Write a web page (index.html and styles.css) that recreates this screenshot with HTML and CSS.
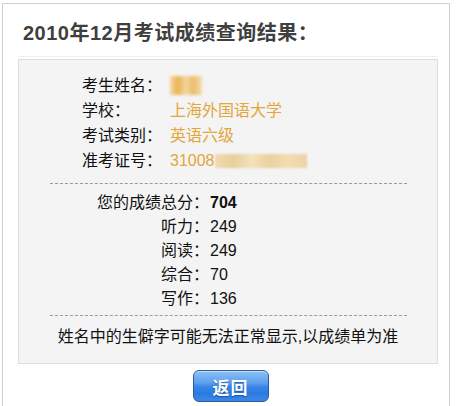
FILE: index.html
```html
<!DOCTYPE html>
<html lang="zh-CN">
<head>
<meta charset="utf-8">
<title>成绩查询结果</title>
<link rel="stylesheet" href="styles.css">
</head>
<body>
<div class="page">
  <h1 class="title">2010年12月考试成绩查询结果：</h1>
  <div class="panel">
    <div class="info">
      <div class="row"><span class="lbl">考生姓名：</span><span class="val"><span class="blur-name"></span></span></div>
      <div class="row"><span class="lbl">学校：</span><span class="val">上海外国语大学</span></div>
      <div class="row"><span class="lbl">考试类别：</span><span class="val">英语六级</span></div>
      <div class="row"><span class="lbl">准考证号：</span><span class="val">31008<span class="blur-num"></span></span></div>
    </div>
    <div class="dash"></div>
    <div class="scores">
      <span class="slbl">您的成绩总分：</span><span class="sval total">704</span>
      <span class="slbl">听力：</span><span class="sval">249</span>
      <span class="slbl">阅读：</span><span class="sval">249</span>
      <span class="slbl">综合：</span><span class="sval">70</span>
      <span class="slbl">写作：</span><span class="sval">136</span>
    </div>
    <div class="dash dash2"></div>
    <p class="note">姓名中的生僻字可能无法正常显示,以成绩单为准</p>
  </div>
  <div class="actions">
    <button class="btn" type="button">返回</button>
  </div>
</div>
</body>
</html>
```
FILE: styles.css
```css
html, body {
  margin: 0;
  padding: 0;
  background: #fff;
  overflow: hidden;
}
body {
  font-family: "Liberation Sans", "Noto Sans CJK SC", sans-serif;
  color: #111;
}
.page {
  margin: 3px 0 0 2px;
  width: 448px;
  height: 403px;
  border: 1px solid #cfcfcf;
  border-bottom: none;
  box-sizing: border-box;
}
.title {
  margin: 0 11px 2px 15px;
  padding: 15px 0 9px 5px;
  font-size: 20px;
  line-height: 28px;
  font-weight: bold;
  letter-spacing: 0.5px;
  color: #3f3f3f;
  border-bottom: 1px solid #f1f1f1;
}
.panel {
  margin: 0 11px 0 15px;
  border: 1px solid #dedede;
  background: #f4f4f4;
  padding-bottom: 14px;
}
.info {
  padding: 13px 0 10px 63px;
}
.row {
  display: flex;
  font-size: 16px;
  line-height: 25px;
  height: 25px;
  align-items: center;
}
.lbl {
  width: 88px;
  color: #111;
}
.val {
  color: #e3a53c;
  display: flex;
  align-items: center;
}
.blur-name {
  display: inline-block;
  width: 32px;
  height: 19px;
  background:
    linear-gradient(90deg, #f2d69a 0%, #e7ad45 25%, #f1d49a 50%, #e9b75a 72%, #f3dba8 100%);
  filter: blur(1.5px);
  opacity: 0.9;
}
.blur-num {
  display: inline-block;
  width: 92px;
  height: 14px;
  background:
    linear-gradient(90deg, #f1dcb0 0%, #e9cf9a 20%, #f3e2bd 40%, #ebd19d 60%, #f2deb4 80%, #ecd3a3 100%);
  filter: blur(1px);
}
.dash {
  margin: 0 30px 0 31px;
  border-top: 1px dashed #9a9a9a;
}
.scores {
  display: grid;
  grid-template-columns: 190px auto;
  padding: 7px 0 4px;
  font-size: 16px;
  line-height: 24px;
}
.slbl {
  text-align: right;
  color: #111;
}
.sval {
  padding-left: 1px;
  color: #111;
}
.total {
  font-weight: bold;
}
.note {
  margin: 0;
  padding-top: 9px;
  text-align: center;
  font-size: 16px;
  line-height: 24px;
  color: #111;
}
.actions {
  margin: 6px 11px 0 15px;
  display: flex;
  justify-content: center;
  padding-left: 5px;
}
.btn {
  width: 76px;
  height: 32px;
  border: 1px solid #2a5a98;
  border-radius: 6px;
  background: linear-gradient(#8cc0f6 0%, #5d9fee 40%, #3a86e6 52%, #2c7ade 75%, #3a88e8 100%);
  color: #fff;
  font-family: "Noto Sans CJK SC", sans-serif;
  font-size: 17px;
  font-weight: bold;
  letter-spacing: 1px;
  text-shadow: 0 1px 1px rgba(0, 40, 100, 0.5);
  padding: 0;
  box-shadow: inset 0 1px 0 rgba(255, 255, 255, 0.5);
}
```
